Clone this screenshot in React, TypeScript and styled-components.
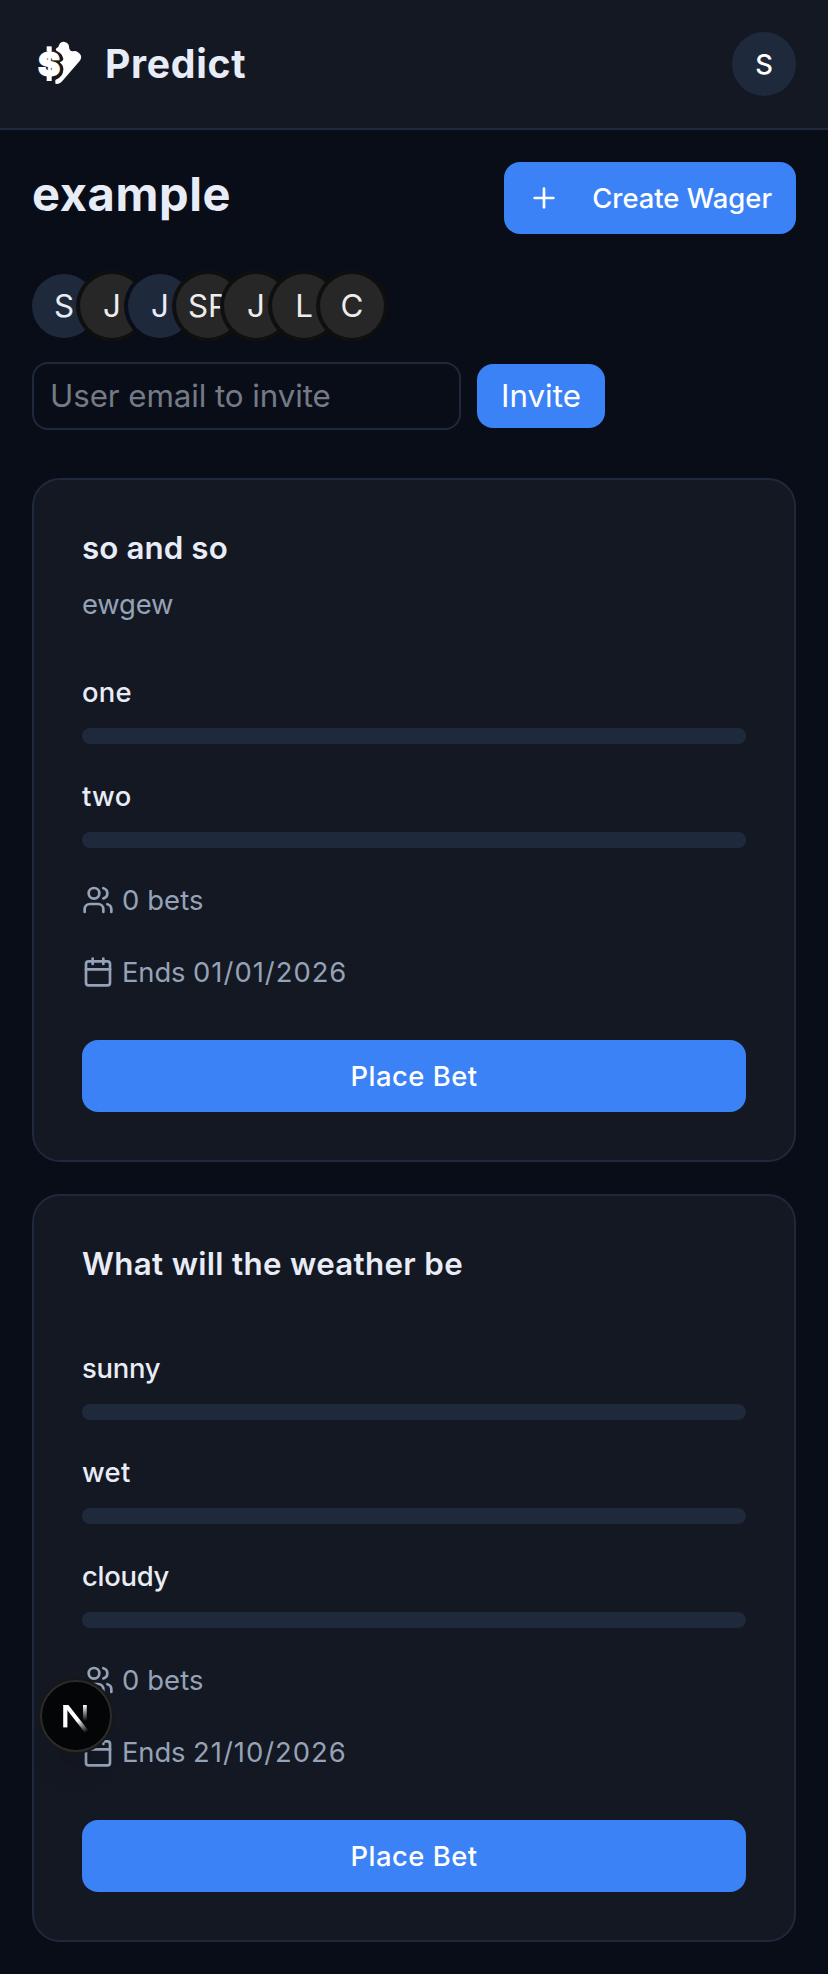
import React from 'react';
import styled, { createGlobalStyle } from 'styled-components';
import { Calendar, Plus, Users } from 'lucide-react';

const color = {
  background: '#090d18',
  card: '#141822',
  border: '#1e293b',
  secondary: '#1e293b',
  primary: '#3b82f6',
  text: '#e8ecf6',
  muted: '#94a3b8',
};

const GlobalStyle = createGlobalStyle`
  *, *::before, *::after { box-sizing: border-box; }
  html, body { margin: 0; background: ${color.background}; }
  body {
    color: ${color.text};
    font-family: Inter, "Liberation Sans", sans-serif;
    font-size: 31.3px;
    line-height: 48px;
  }
  h1, h2, p, ul { margin: 0; padding: 0; }
  button, input { font: inherit; color: inherit; border: 0; margin: 0; }
`;

const Page = styled.div`
  position: relative;
  min-height: 1974px;
`;

const Header = styled.header`
  display: flex;
  align-items: center;
  justify-content: space-between;
  height: 130px;
  padding: 0 32px;
  background: ${color.card};
  border-bottom: 2px solid ${color.border};
`;

const Brand = styled.div`
  display: flex;
  align-items: center;
  gap: 16px;
`;

const BrandLogo = styled.svg`
  display: block;
  width: 56px;
  height: 56px;
  margin-top: -4px;
`;

const BrandName = styled.span`
  padding-left: 1px;
  font-size: 39.2px;
  font-weight: 700;
  letter-spacing: 0.7px;
`;

const Avatar = styled.div<{ $tone?: 'blue' | 'grey' }>`
  display: flex;
  flex: none;
  align-items: center;
  justify-content: center;
  width: 64px;
  height: 64px;
  border-radius: 50%;
  background: ${(p) => (p.$tone === 'grey' ? '#272727' : color.secondary)};
  color: ${(p) => (p.$tone === 'grey' ? '#ededed' : color.text)};
`;

const UserAvatar = styled(Avatar)`
  color: #fff;
  font-size: 27.4px;
  font-weight: 500;
`;

const Main = styled.main`
  padding: 32px;
`;

const TitleRow = styled.div`
  display: flex;
  align-items: flex-start;
  justify-content: space-between;
`;

const PageTitle = styled.h1`
  font-size: 47px;
  line-height: 64px;
  font-weight: 700;
  letter-spacing: 0.62px;
`;

const Button = styled.button<{ $full?: boolean }>`
  display: flex;
  align-items: center;
  justify-content: center;
  width: ${(p) => (p.$full ? '100%' : 'auto')};
  height: 72px;
  padding: 0 24px;
  border-radius: 16px;
  background: ${color.primary};
  color: #fff;
  font-size: 27.4px;
  font-weight: 500;
  letter-spacing: ${(p) => (p.$full ? '0.5px' : '0')};
`;

const CreateButton = styled(Button)`
  justify-content: space-between;
  width: 292px;
`;

const Members = styled.div`
  display: flex;
  margin-top: 40px;
`;

const Member = styled(Avatar)`
  box-shadow: 0 0 0 4px ${(p) => (p.$tone === 'grey' ? '#0f0f0f' : color.background)};

  & + & {
    margin-left: -16px;
  }
`;

const InviteRow = styled.form`
  display: flex;
  align-items: center;
  gap: 16px;
  margin-top: 24px;
`;

const EmailInput = styled.input`
  width: 429px;
  height: 68px;
  padding: 0 16px;
  border: 2px solid ${color.border};
  border-radius: 16px;
  background: transparent;
  outline: none;
  letter-spacing: -0.08px;

  &::placeholder {
    color: #757b85;
    opacity: 1;
  }
`;

const InviteButton = styled.button`
  width: 128px;
  height: 64px;
  padding: 0;
  border-radius: 16px;
  background: ${color.primary};
  color: #fff;
`;

const Wagers = styled.div`
  display: flex;
  flex-direction: column;
  gap: 32px;
  margin-top: 48px;
`;

const Card = styled.section`
  padding: 48px;
  border: 2px solid ${color.border};
  border-radius: 28px;
  background: ${color.card};
`;

const CardHeader = styled.div`
  display: flex;
  flex-direction: column;
  gap: 16px;
  margin-bottom: 48px;
`;

const CardTitle = styled.h2<{ $spacing: string }>`
  font-size: 31.3px;
  line-height: 40px;
  font-weight: 600;
  letter-spacing: ${(p) => p.$spacing};
`;

const CardDescription = styled.p`
  color: ${color.muted};
  font-size: 27.4px;
  line-height: 40px;
  letter-spacing: -0.17px;
`;

const CardBody = styled.div`
  display: flex;
  flex-direction: column;
  gap: 32px;
`;

const Option = styled.div`
  display: flex;
  flex-direction: column;
  gap: 16px;
`;

const OptionLabel = styled.span<{ $short: boolean }>`
  font-size: 27.4px;
  line-height: 40px;
  font-weight: 500;
  letter-spacing: ${(p) => (p.$short ? '0.3px' : '-0.25px')};
`;

const Track = styled.div`
  height: 16px;
  border-radius: 8px;
  background: ${color.secondary};
`;

const Meta = styled.div`
  display: flex;
  align-items: center;
  gap: 8px;
  height: 40px;
  color: ${color.muted};
  font-size: 27.4px;
  line-height: 40px;
  letter-spacing: 0.12px;

  svg { flex: none; }
`;

const EndsText = styled.span`
  letter-spacing: -0.1px;
`;

const EndsDate = styled.time`
  letter-spacing: 1px;
`;

const CardFooter = styled.div`
  margin-top: 48px;
`;

const DevBadge = styled.div`
  position: absolute;
  left: 40px;
  top: 1680px;
  width: 72px;
  height: 72px;
  border: 2px solid #2b2b2b;
  border-radius: 50%;
  background: #040507;
  box-shadow: 0 0 0 2px #171717, 0 32px 32px -16px rgba(0, 0, 0, 0.12);

  svg { display: block; margin: -2px; }
`;

const Logo = () => (
  <BrandLogo viewBox="0 0 168 168" fill="#fff">
    <path d="M73 50 Q69 45 74 42 Q80 40 81 34 Q84 23 95 23 Q104 23 109 31 Q112 37 112 45 Q116 53 122 52 Q130 49 137 54 Q150 62 147 73 Q146 78 141 83 L91 141 Q84 150 76 150 L70 149 V138 Q82 134 89 124 Q98 108 91 93 L83 85 Q94 80 94 74 Q91 58 73 50 Z" />
    <text
      x="51"
      y="127"
      textAnchor="middle"
      fontFamily="Inter, sans-serif"
      fontWeight="900"
      fontSize="100"
      stroke="#fff"
      strokeWidth="3"
    >
      $
    </text>
    <rect x="44" y="37" width="15" height="16" />
    <rect x="44" y="124" width="15" height="17" />
  </BrandLogo>
);

const FrameworkMark = () => (
  <svg width="72" height="72" viewBox="0 0 72 72" fill="none">
    <defs>
      <linearGradient id="diagonal" x1="38" y1="40" x2="47" y2="52" gradientUnits="userSpaceOnUse">
        <stop stopColor="#fff" />
        <stop offset="1" stopColor="#fff" stopOpacity="0" />
      </linearGradient>
      <linearGradient id="stem" x1="45" y1="25" x2="45" y2="41" gradientUnits="userSpaceOnUse">
        <stop stopColor="#fff" />
        <stop offset="1" stopColor="#fff" stopOpacity="0" />
      </linearGradient>
    </defs>
    <rect x="23.2" y="25" width="4.2" height="22.4" fill="#fff" />
    <path d="M23.2 25H28.4L48.4 50.4L45 52.8L23.2 25Z" fill="url(#diagonal)" />
    <rect x="43" y="25" width="3.8" height="16.5" fill="url(#stem)" />
  </svg>
);

type Wager = {
  title: string;
  description?: string;
  options: string[];
  bets: number;
  ends: string;
};

const wagers: Wager[] = [
  { title: 'so and so', description: 'ewgew', options: ['one', 'two'], bets: 0, ends: '01/01/2026' },
  { title: 'What will the weather be', description: '', options: ['sunny', 'wet', 'cloudy'], bets: 0, ends: '21/10/2026' },
];

const members: { initials: string; tone: 'blue' | 'grey' }[] = [
  { initials: 'S', tone: 'blue' },
  { initials: 'J', tone: 'grey' },
  { initials: 'J', tone: 'blue' },
  { initials: 'SP', tone: 'grey' },
  { initials: 'J', tone: 'grey' },
  { initials: 'L', tone: 'grey' },
  { initials: 'C', tone: 'grey' },
];

const WagerCard = ({ wager }: { wager: Wager }) => (
  <Card>
    <CardHeader>
      <CardTitle $spacing={wager.title.length > 12 ? '0.33px' : '0.1px'}>{wager.title}</CardTitle>
      <CardDescription>{wager.description}</CardDescription>
    </CardHeader>
    <CardBody>
      {wager.options.map((option) => (
        <Option key={option}>
          <OptionLabel $short={option.length < 4}>{option}</OptionLabel>
          <Track />
        </Option>
      ))}
      <Meta>
        <Users size={32} />
        <span>{wager.bets} bets</span>
      </Meta>
      <Meta>
        <Calendar size={32} />
        <EndsText>
          Ends <EndsDate>{wager.ends}</EndsDate>
        </EndsText>
      </Meta>
    </CardBody>
    <CardFooter>
      <Button $full>Place Bet</Button>
    </CardFooter>
  </Card>
);

export default function App() {
  return (
    <Page>
      <GlobalStyle />
      <Header>
        <Brand>
          <Logo />
          <BrandName>Predict</BrandName>
        </Brand>
        <UserAvatar>S</UserAvatar>
      </Header>
      <Main>
        <TitleRow>
          <PageTitle>example</PageTitle>
          <CreateButton>
            <Plus size={32} strokeWidth={2} />
            <span>Create Wager</span>
          </CreateButton>
        </TitleRow>
        <Members>
          {members.map((m, i) => (
            <Member key={i} $tone={m.tone}>{m.initials}</Member>
          ))}
        </Members>
        <InviteRow onSubmit={(e) => e.preventDefault()}>
          <EmailInput placeholder="User email to invite" />
          <InviteButton>Invite</InviteButton>
        </InviteRow>
        <Wagers>
          {wagers.map((w) => (
            <WagerCard key={w.title} wager={w} />
          ))}
        </Wagers>
      </Main>
      <DevBadge>
        <FrameworkMark />
      </DevBadge>
    </Page>
  );
}
